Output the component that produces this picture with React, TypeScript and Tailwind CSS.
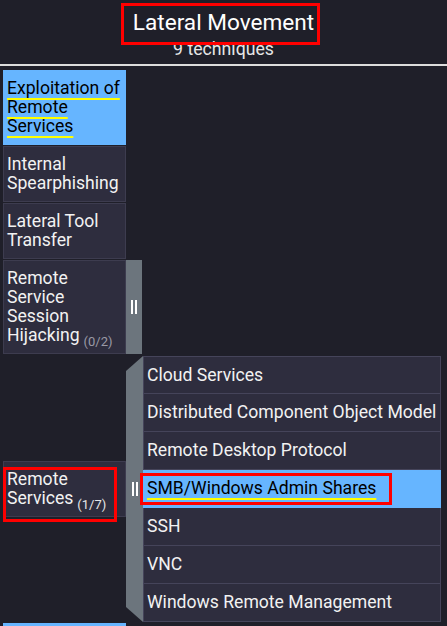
import type { ReactNode } from 'react';

type Technique = {
  name: string;
  active?: boolean;
  marked?: boolean;
  count?: string;
};

const techniques: Technique[] = [
  { name: 'Exploitation of Remote Services', active: true, marked: true },
  { name: 'Internal Spearphishing' },
  { name: 'Lateral Tool Transfer' },
  { name: 'Remote Service Session Hijacking', count: '(0/2)' },
];

const after: Technique[] = [
  { name: 'Replication Through Removable Media', active: true },
  { name: 'Software Deployment Tools' },
  { name: 'Taint Shared Content' },
  { name: 'Use Alternate Authentication Material' },
];

const subs = [
  'Cloud Services',
  'Distributed Component Object Model',
  'Remote Desktop Protocol',
  'SMB/Windows Admin Shares',
  'SSH',
  'VNC',
  'Windows Remote Management',
];

function Bars() {
  return (
    <div className="flex gap-[2px]">
      <div className="w-[2px] h-[14px] bg-white" />
      <div className="w-[2px] h-[14px] bg-white" />
    </div>
  );
}

function Cell({ active, children }: { active?: boolean; children: ReactNode }) {
  return (
    <div
      className={
        active
          ? 'relative w-[123px] shrink-0 border border-[#66b5ff] bg-[#66b5ff] px-[3px] py-[8px] text-[17.6px] leading-[19px] text-black'
          : 'relative w-[123px] shrink-0 border border-[#3d3c4f] bg-[#2e2d3e] px-[3px] py-[8px] text-[17.6px] leading-[19px] text-[#f2f2f2]'
      }
    >
      {children}
    </div>
  );
}

export default function App() {
  return (
    <div className="min-h-[626px] bg-[#1f1f29] font-['Roboto',sans-serif]">
      {/* header */}
      <div className="relative border-b-2 border-[#dcdcdc] pt-[10px] pb-[5px] text-center text-white">
        <div className="text-[22.6px] leading-[26px]">Lateral Movement</div>
        <div className="mt-[3px] text-[17.7px] leading-[20px] text-[#e6e6e6]">9 techniques</div>
        <div className="absolute left-[121px] top-[3px] h-[42px] w-[199px] border-[3px] border-[#ff0000]" />
      </div>

      <div className="flex flex-col gap-px pl-[3px] pt-[4px]">
        {techniques.map((t) => (
          <div key={t.name} className="flex">
            <Cell active={t.active}>
              {t.marked ? (
                <span className="underline decoration-[#ffff00] decoration-2 underline-offset-[4px] [text-decoration-skip-ink:none]">
                  {t.name}
                </span>
              ) : (
                t.name
              )}
              {t.count && (
                <span className="relative top-[5px] ml-[4px] text-[13px] leading-[10px] text-[#9a9aa6]">{t.count}</span>
              )}
            </Cell>
            {t.count && (
              <div className="flex w-[16px] items-center justify-center bg-[#6c757d]">
                <Bars />
              </div>
            )}
          </div>
        ))}

        {/* Remote Services, expanded */}
        <div className="mt-px flex">
          <div className="self-center">
            <Cell>
              Remote Services
              <span className="relative top-[5px] ml-[4px] text-[13px] leading-[10px] text-[#e6e6e6]">(1/7)</span>
              <div className="absolute -left-[1px] top-[5px] h-[55px] w-[114px] border-[3px] border-[#ff0000]" />
            </Cell>
          </div>
          <div className="flex w-[17px] items-center justify-center bg-[#6c757d] [clip-path:polygon(0_15px,100%_0,100%_100%,0_calc(100%_-_15px))]">
            <Bars />
          </div>
          <div className="w-[298px]">
            {subs.map((s, i) => {
              const on = s.startsWith('SMB');
              return (
                <div
                  key={s}
                  className={
                    (on
                      ? 'border-[#66b5ff] bg-[#66b5ff] text-black '
                      : 'border-[#45445a] bg-[#2e2d3e] text-[#f2f2f2] ') +
                    (i === 0 ? 'border-t ' : '') +
                    'relative flex h-[38px] items-center whitespace-nowrap border-x border-b pl-[3px] text-[17.6px]'
                  }
                >
                  {on ? (
                    <span className="underline decoration-[#ffff00] decoration-2 underline-offset-[4px] [text-decoration-skip-ink:none]">
                      {s}
                    </span>
                  ) : (
                    s
                  )}
                  {on && (
                    <div className="absolute -left-[4px] top-[3px] h-[32px] w-[252px] border-[3px] border-[#ff0000]" />
                  )}
                </div>
              );
            })}
          </div>
        </div>

        {after.map((t) => (
          <div key={t.name} className="flex">
            <Cell active={t.active}>{t.name}</Cell>
          </div>
        ))}
      </div>
    </div>
  );
}
